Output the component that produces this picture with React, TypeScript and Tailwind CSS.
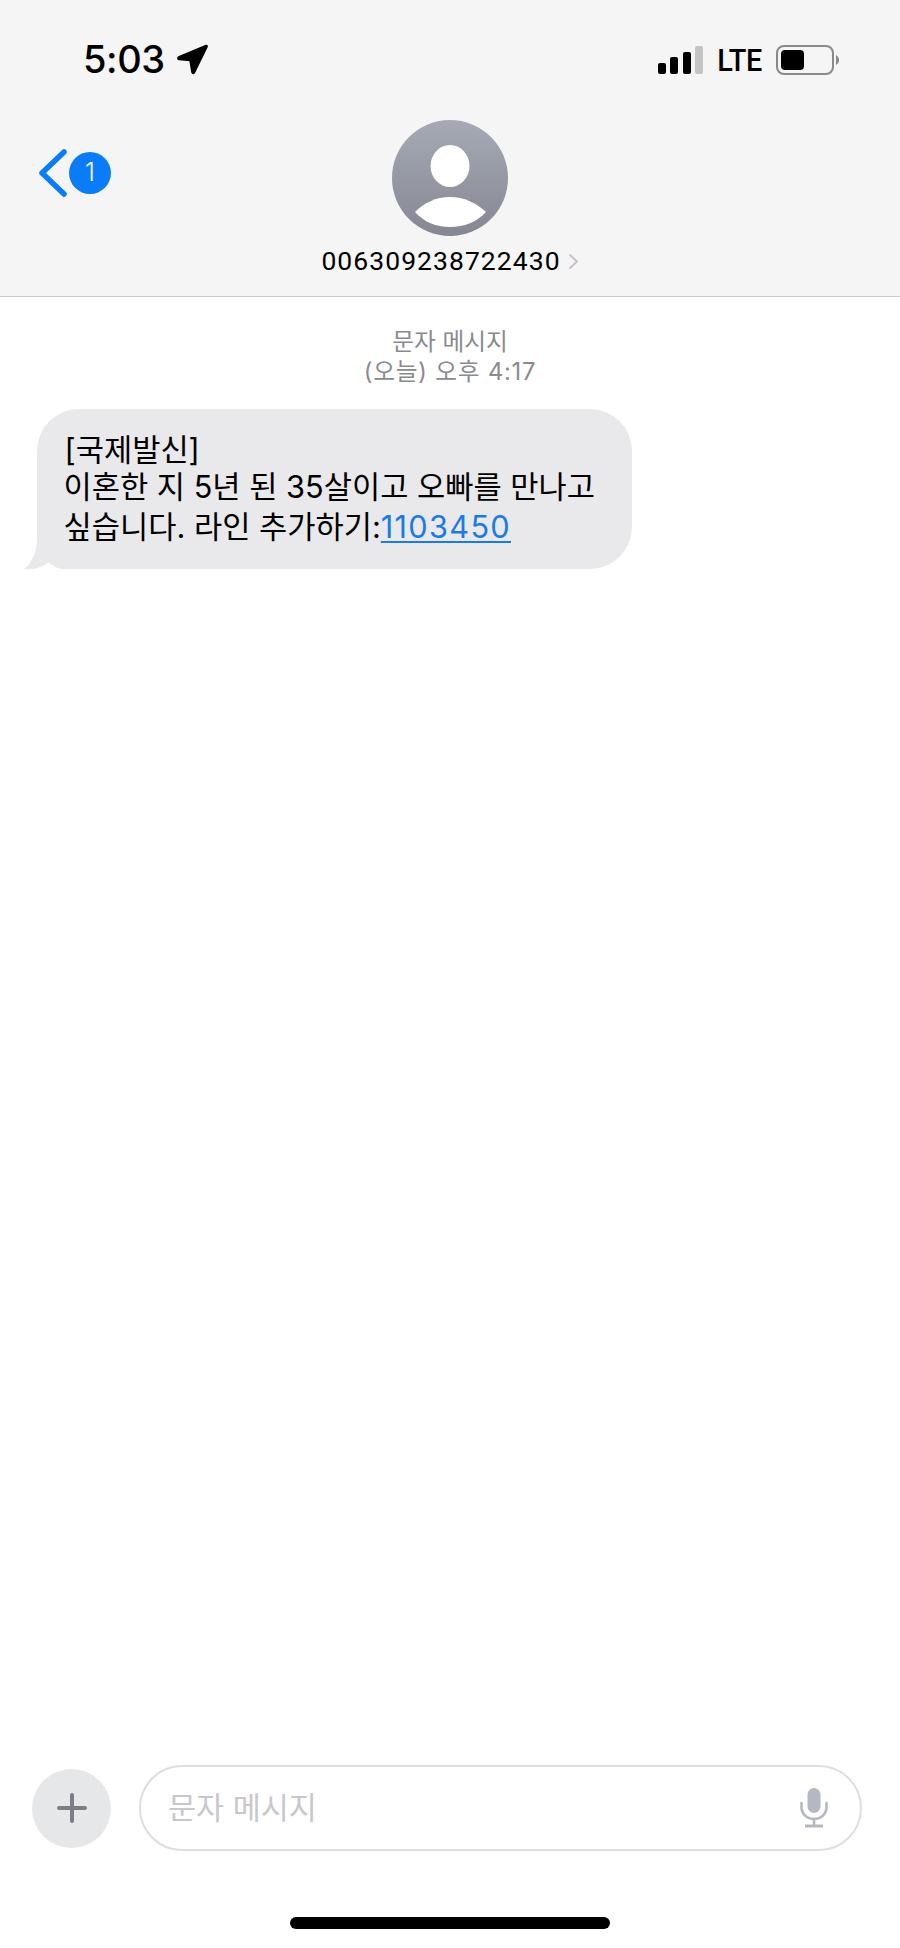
import React from 'react';

const FONT = "font-['Inter','Noto_Sans_CJK_KR',sans-serif]";

const SignalBars = () => (
    <div className="flex items-end gap-[4.3px]">
        <div className="w-[8px] h-[11px] rounded-[2px] bg-black" />
        <div className="w-[8px] h-[17px] rounded-[2px] bg-black" />
        <div className="w-[8px] h-[22px] rounded-[2px] bg-black" />
        <div className="w-[8px] h-[28px] rounded-[2px] bg-[#c4c4c4]" />
    </div>
);

const Battery = () => (
    <div className="flex items-center gap-[2px]">
        <div className="w-[58px] h-[30px] rounded-[8px] border-[2px] border-[#8a8a8a] p-[3px]">
            <div className="w-[23px] h-[20px] rounded-[4px] bg-black" />
        </div>
        <svg width="3" height="10" viewBox="0 0 3 10">
            <path d="M0 0 C2 1 3 3 3 5 C3 7 2 9 0 10 Z" fill="#8a8a8a" />
        </svg>
    </div>
);

const StatusBar = () => (
    <div className="flex items-start justify-between pt-[43px] pl-[83px] pr-[61px]">
        <div className="flex items-center gap-[11px]">
            <span className="text-[38px] leading-[32px] font-[550] tracking-[-0.4px] text-black">5:03</span>
            <svg width="32" height="32" viewBox="0 0 32 32">
                <path d="M30 2.5 L2.5 14 Q1 16 3 16.5 L14 17.5 L16 29.5 Q17 31.5 18.5 29.5 L31 4 Q31.5 2 30 2.5 Z" fill="black" stroke="black" strokeWidth="1.5" strokeLinejoin="round" />
            </svg>
        </div>
        <div className="flex items-center gap-[14px] mt-[2px]">
            <SignalBars />
            <span className="w-[45px] flex justify-center font-['Roboto',sans-serif] text-[32px] leading-[30px] font-medium tracking-[-0.5px] text-black scale-x-[0.9]">LTE</span>
            <Battery />
        </div>
    </div>
);

const Avatar = () => (
    <div className="w-[116px] h-[116px] rounded-full overflow-hidden bg-gradient-to-b from-[#a6aab5] to-[#858893]">
        <svg width="116" height="116" viewBox="0 0 116 116">
            <ellipse cx="58" cy="46" rx="19.5" ry="21" fill="white" />
            <path d="M23 92 C32 83 44 77 58 77 C72 77 84 83 94 92 C85 102 72 107 58 107 C44 107 32 102 23 92 Z" fill="white" />
        </svg>
    </div>
);

const NavBar = () => (
    <div className="grid grid-cols-[1fr_auto_1fr] mt-[45px]">
        <div className="flex items-center gap-[2px] pl-[39px] h-[106px]">
            <svg width="28" height="48" viewBox="0 0 28 48" fill="none">
                <path d="M25 3 L3 24 L25 45" stroke="#0a7cf8" strokeWidth="5.5" strokeLinecap="round" strokeLinejoin="round" />
            </svg>
            <div className="w-[42px] h-[42px] rounded-full bg-[#0a7cf8] flex items-center justify-center text-white text-[25px] font-light">1</div>
        </div>
        <div className="flex flex-col items-center">
            <Avatar />
            <div className="flex items-center gap-[7px] mt-[10px] font-['Roboto',sans-serif] text-[26.5px] leading-[30px] tracking-[1.05px] text-black">
                <span>006309238722430</span>
                <svg width="11" height="17" viewBox="0 0 11 17" fill="none">
                    <path d="M1.5 1.5 L9 8.5 L1.5 15.5" stroke="#c4c4c6" strokeWidth="2" />
                </svg>
            </div>
        </div>
        <div />
    </div>
);

const MessageBubble = () => (
    <div className="relative ml-[37px] mt-[22px] w-[595px] h-[160px] rounded-[42px] rounded-bl-[30px] bg-[#e9e9eb] pt-[21px] pl-[26.5px] text-[30.7px] leading-[39px] text-black">
        <svg className="absolute left-[-15px] top-[121px]" width="42" height="40" viewBox="0 0 42 40">
            <path d="M15 0 L15 10 C15 22 9 34 2 39 C12 40 22 37 28 31 C31 35 34 38 39 39 L42 39 L42 0 Z" fill="#e9e9eb" />
        </svg>
        <div className="relative">
            <div className="pl-[1px]">[국제발신]</div>
            <div className="-mt-[2px]">이혼한 지 5년 된 35살이고 오빠를 만나고</div>
            <div className="mt-[1px]">
                싶습니다. 라인 추가하기:<span className="text-[#1b7be6] underline decoration-2 underline-offset-[3px] tracking-[1.3px]">1103450</span>
            </div>
        </div>
    </div>
);

const InputBar = () => (
    <div className="flex items-center gap-[28px] pl-[32px] pr-[38px]">
        <div className="w-[79px] h-[79px] rounded-full bg-[#e6e7e9] flex items-center justify-center">
            <svg width="30" height="30" viewBox="0 0 30 30">
                <path d="M15 2 V28 M2 15 H28" stroke="#7d7e85" strokeWidth="4" strokeLinecap="round" />
            </svg>
        </div>
        <div className="flex-1 h-[86px] rounded-[43px] border-[2px] border-[#dedede] flex items-center justify-between pl-[27px] pr-[32px]">
            <span className="text-[30.5px] text-[#c7c7cc]">문자 메시지</span>
            <svg width="28" height="40" viewBox="0 0 28 40" fill="none">
                <rect x="7.5" y="0" width="13" height="25" rx="6.5" fill="#b5b8c0" />
                <path d="M1.5 15 V19 C1.5 26 7 31 14 31 C21 31 26.5 26 26.5 19 V15 M14 31 V37" stroke="#b5b8c0" strokeWidth="2.6" strokeLinecap="round" />
                <path d="M5 38 H23" stroke="#b5b8c0" strokeWidth="3" />
            </svg>
        </div>
    </div>
);

export default function App() {
    return (
        <div className={`${FONT} w-[900px] h-[1948px] bg-white flex flex-col overflow-hidden`}>
            <header className="h-[297px] bg-[#f5f5f5] border-b border-[#c9c9c9]">
                <StatusBar />
                <NavBar />
            </header>

            <div className="mt-[30px] text-center text-[23.7px] leading-[30px] text-[#8a8a8e]">
                <div>문자 메시지</div>
                <div className="tracking-[0.8px]">(오늘) 오후 4:17</div>
            </div>
            <MessageBubble />

            <div className="mt-auto">
                <InputBar />
                <div className="flex justify-center pt-[66px] pb-[19px]">
                    <div className="w-[320px] h-[12px] rounded-full bg-black" />
                </div>
            </div>
        </div>
    );
}
